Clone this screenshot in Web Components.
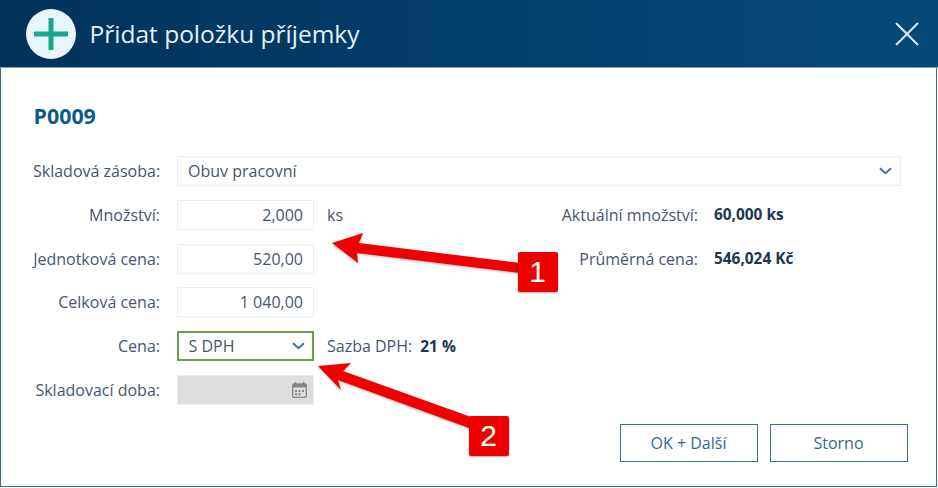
<!DOCTYPE html>
<html lang="cs">
<head>
<meta charset="utf-8">
<title>Přidat položku příjemky</title>
<style>
  html, body { margin: 0; background: #fff; }
  body { font: 16px/20px "Open Sans", "Noto Sans", sans-serif; color: #47566e; }
  b.val { color: #1d3552; font-weight: 700; font-size: 15.5px; }
</style>
</head>
<body>
<receipt-dialog>
  <dialog-header slot="header" heading="Přidat položku příjemky"></dialog-header>

  <form-row label="Skladová zásoba:" wide>
    <select-box value="Obuv pracovní"></select-box>
  </form-row>
  <form-row label="Množství:">
    <text-box value="2,000"></text-box>
    <span slot="after">ks</span>
    <info-pair slot="aside" label="Aktuální množství:" value="60,000 ks"></info-pair>
  </form-row>
  <form-row label="Jednotková cena:">
    <text-box value="520,00"></text-box>
    <info-pair slot="aside" label="Průměrná cena:" value="546,024 Kč"></info-pair>
  </form-row>
  <form-row label="Celková cena:">
    <text-box value="1 040,00"></text-box>
  </form-row>
  <form-row label="Cena:">
    <select-box value="S DPH" focused></select-box>
    <span slot="after">Sazba DPH:</span>
    <b class="val" slot="after">21 %</b>
  </form-row>
  <form-row label="Skladovací doba:">
    <date-box></date-box>
  </form-row>

  <dialog-button slot="footer">OK + Další</dialog-button>
  <dialog-button slot="footer">Storno</dialog-button>

  <callout-layer slot="overlay"></callout-layer>
</receipt-dialog>

<script>
class ReceiptDialog extends HTMLElement {
  constructor() {
    super();
    this.attachShadow({ mode: 'open' });
    this.shadowRoot.innerHTML = `
      <style>
        :host {
          display: flex;
          flex-direction: column;
          position: relative;
          box-sizing: border-box;
          width: 937px;
          height: 487px;
          border: solid #3d6a8f;
          border-width: 0 1.5px 1.5px 1.5px;
          background: #fff;
        }
        h2 {
          margin: 0;
          padding: 33px 0 0 32.5px;
          font-size: 21.4px;
          line-height: 30px;
          font-weight: 700;
          color: #0d5a8b;
        }
        .form {
          display: grid;
          grid-auto-rows: 30px;
          row-gap: 13.75px;
          margin-top: 25px;
          padding: 0 35px 0 32px;
        }
        .footer {
          display: flex;
          justify-content: flex-end;
          gap: 12px;
          margin-top: auto;
          padding: 0 28.5px 24px 0;
        }
      </style>
      <slot name="header"></slot>
      <h2>P0009</h2>
      <div class="form"><slot></slot></div>
      <div class="footer"><slot name="footer"></slot></div>
      <slot name="overlay"></slot>
    `;
  }
}

class DialogHeader extends HTMLElement {
  constructor() {
    super();
    this.attachShadow({ mode: 'open' });
    this.shadowRoot.innerHTML = `
      <style>
        :host {
          display: flex;
          align-items: center;
          flex: none;
          height: 68px;
          margin: 0 -1.5px;
          padding: 0 19px 0 26.5px;
          background: linear-gradient(90deg, #02325a 0%, #044a79 100%);
          border-bottom: 1px solid #7f9db5;
          box-sizing: border-box;
        }
        .title {
          flex: 1;
          margin-left: 13.5px;
          font-size: 24.5px;
          line-height: 32px;
          color: #e6f0f8;
        }
        svg { display: block; flex: none; }
      </style>
      <svg width="50" height="50" viewBox="0 0 50 50">
        <circle cx="25" cy="25" r="25" fill="#e9f4fb"/>
        <path d="M25 9v32M8 25h34" stroke="#1aa88c" stroke-width="5" fill="none"/>
      </svg>
      <div class="title">${this.getAttribute('heading')}</div>
      <svg width="24" height="24" viewBox="0 0 24 24">
        <path d="M1 1l22 22M23 1L1 23" stroke="#dfe9f1" stroke-width="2" fill="none"/>
      </svg>
    `;
  }
}

class FormRow extends HTMLElement {
  constructor() {
    super();
    this.attachShadow({ mode: 'open' });
    const wide = this.hasAttribute('wide');
    this.shadowRoot.innerHTML = `
      <style>
        :host {
          display: grid;
          grid-template-columns: ${wide ? '127px 1fr' : '127px 137px 1fr'};
          align-items: center;
          column-gap: 17px;
        }
        .label { text-align: right; white-space: nowrap; }
        .rest { display: flex; align-items: center; gap: 8px; margin-left: -4px; }
        .aside { margin-left: auto; }
      </style>
      <div class="label">${this.getAttribute('label')}</div>
      <slot></slot>
      ${wide ? '' : '<div class="rest"><slot name="after"></slot><div class="aside"><slot name="aside"></slot></div></div>'}
    `;
  }
}

const fieldStyle = `
  :host {
    display: flex;
    align-items: center;
    box-sizing: border-box;
    height: 30px;
    padding: 0 10px;
    border: 1.5px solid #e9eef8;
    background: #fff;
    color: #47566e;
  }
`;

class TextBox extends HTMLElement {
  constructor() {
    super();
    this.attachShadow({ mode: 'open' });
    this.shadowRoot.innerHTML = `
      <style>
        ${fieldStyle}
        :host { justify-content: flex-end; }
      </style>
      <span>${this.getAttribute('value')}</span>
    `;
  }
}

class SelectBox extends HTMLElement {
  constructor() {
    super();
    this.attachShadow({ mode: 'open' });
    this.shadowRoot.innerHTML = `
      <style>
        ${fieldStyle}
        :host { justify-content: space-between; padding-right: 8px; }
        :host([focused]) { border: 2px solid #6a9f4b; padding-left: 9.5px; padding-right: 7.5px; }
        svg { display: block; }
      </style>
      <span>${this.getAttribute('value')}</span>
      <svg width="13" height="8" viewBox="0 0 13 8">
        <path d="M1 1.2l5.5 5 5.5-5" stroke="#44709a" stroke-width="2" fill="none"/>
      </svg>
    `;
  }
}

class DateBox extends HTMLElement {
  constructor() {
    super();
    this.attachShadow({ mode: 'open' });
    this.shadowRoot.innerHTML = `
      <style>
        ${fieldStyle}
        :host { justify-content: flex-end; padding-right: 6px; background: #dedede; }
        svg { display: block; }
      </style>
      <svg width="15" height="16" viewBox="0 0 15 16">
        <path d="M3.5 0v3M11.5 0v3" stroke="#868686" stroke-width="1.6"/>
        <rect x=".7" y="2" width="13.6" height="13.3" rx="1" fill="none" stroke="#868686" stroke-width="1.3"/>
        <rect x="1" y="2" width="13" height="3.5" fill="#868686"/>
        <path d="M3 8h2v2H3zM6.5 8h2v2h-2zM10 8h2v2h-2zM3 11.3h2v2H3zM6.5 11.3h2v2h-2z" fill="#868686"/>
      </svg>
    `;
  }
}

class InfoPair extends HTMLElement {
  constructor() {
    super();
    this.attachShadow({ mode: 'open' });
    this.shadowRoot.innerHTML = `
      <style>
        :host {
          display: grid;
          grid-template-columns: 200px 187px;
          column-gap: 16px;
        }
        .label { text-align: right; }
        .value { font-weight: 700; font-size: 15.4px; color: #1d3552; }
      </style>
      <div class="label">${this.getAttribute('label')}</div>
      <div class="value">${this.getAttribute('value')}</div>
    `;
  }
}

class DialogButton extends HTMLElement {
  constructor() {
    super();
    this.attachShadow({ mode: 'open' });
    this.shadowRoot.innerHTML = `
      <style>
        :host {
          display: flex;
          align-items: center;
          justify-content: center;
          box-sizing: border-box;
          width: 138px;
          height: 38px;
          border: 1.5px solid #33709b;
          font-size: 16px;
          color: #2f6a95;
          background: #fff;
        }
      </style>
      <slot></slot>
    `;
  }
}

// red arrows and numbered tags drawn over the dialog
class CalloutLayer extends HTMLElement {
  constructor() {
    super();
    this.attachShadow({ mode: 'open' });
    this.shadowRoot.innerHTML = `
      <style>
        :host {
          position: absolute;
          left: -1.5px;
          top: 0;
          width: 938px;
          height: 488px;
          pointer-events: none;
        }
        svg { position: absolute; left: 0; top: 0; filter: drop-shadow(0 1px 1px rgba(0,0,0,.3)); }
        .tag {
          position: absolute;
          box-sizing: border-box;
          width: 40px;
          height: 40px;
          border-radius: 2px;
          background: #ee0000;
          box-shadow: 0 1px 2px rgba(0,0,0,.35);
          color: #fff;
          font: 30px/40px "Liberation Sans", sans-serif;
          text-align: center;
        }
      </style>
      <svg width="938" height="488" viewBox="0 0 938 488">
        <polygon points="332,243 363,233 359,243 520,263 520,273 357,253 358,263" fill="#f00000"/>
        <polygon points="318,366 351,363 343,371 471,417 469,428 338,380 341,390" fill="#f00000"/>
      </svg>
      <div class="tag" style="left:518px;top:252px">1</div>
      <div class="tag" style="left:469px;top:416px">2</div>
    `;
  }
}

customElements.define('receipt-dialog', ReceiptDialog);
customElements.define('dialog-header', DialogHeader);
customElements.define('form-row', FormRow);
customElements.define('text-box', TextBox);
customElements.define('select-box', SelectBox);
customElements.define('date-box', DateBox);
customElements.define('info-pair', InfoPair);
customElements.define('dialog-button', DialogButton);
customElements.define('callout-layer', CalloutLayer);
</script>
</body>
</html>
